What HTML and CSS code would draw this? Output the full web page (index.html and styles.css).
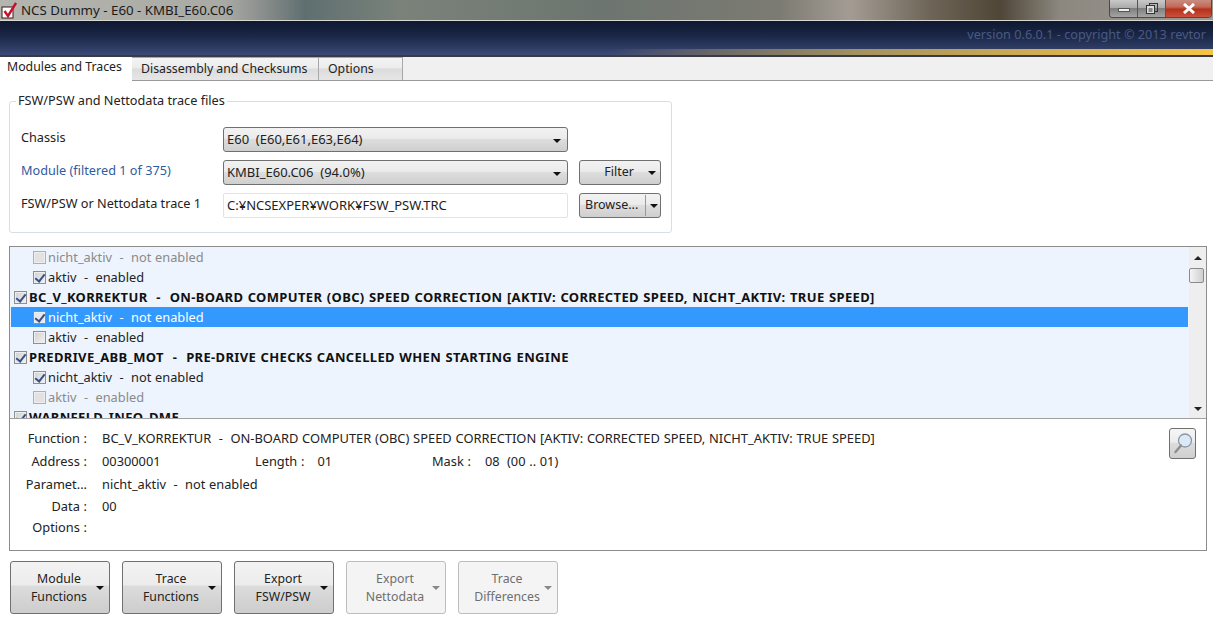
FILE: index.html
```html
<!DOCTYPE html>
<html lang="en">
<head>
<meta charset="utf-8">
<title>NCS Dummy</title>
<link rel="stylesheet" href="styles.css">
</head>
<body>
<div class="window">
  <header class="titlebar">
    <svg class="app-icon" width="16" height="17" viewBox="0 0 16 17"><rect x="1" y="5" width="11" height="11" fill="#fff" stroke="#3a1a1a"/><path d="M3.500 9l3.500 5L15 1" fill="none" stroke="#c8102e" stroke-width="2.400"/></svg>
    <span class="title-text">NCS Dummy - E60 - KMBI_E60.C06</span>
    <div class="caption-buttons">
      <span class="cap cap-min"><i></i></span>
      <span class="cap cap-max"><svg width="13" height="12" viewBox="0 0 13 12"><rect x="4.500" y="0.500" width="8" height="8" fill="none" stroke="#333" /><rect x="1.500" y="2.500" width="8" height="8" fill="#ddd" stroke="#333"/><rect x="3.500" y="5" width="4" height="4" fill="#888"/></svg></span>
      <span class="cap cap-close"><svg width="14" height="11" viewBox="0 0 14 11"><path d="M2 1l10 9M12 1L2 10" stroke="#fff" stroke-width="3"/></svg></span>
    </div>
  </header>
  <div class="banner">
    <div class="version">version 0.6.0.1 - copyright © 2013 revtor</div>
    <div class="goldline"></div>
  </div>
  <nav class="tabs">
    <span class="tab active">Modules and Traces</span>
    <span class="tab tab-dis">Disassembly and Checksums</span>
    <span class="tab tab-opt">Options</span>
  </nav>
  <main class="content">
    <fieldset class="group">
      <legend>FSW/PSW and Nettodata trace files</legend>
      <div class="form-grid">
        <label class="flabel">Chassis</label>
        <div class="combo">E60&nbsp; (E60,E61,E63,E64)<span class="arrow"></span></div>
        <div></div>
        <label class="flabel blue">Module (filtered 1 of 375)</label>
        <div class="combo">KMBI_E60.C06&nbsp; (94.0%)<span class="arrow"></span></div>
        <div class="btn small filter">Filter<span class="arrow"></span></div>
        <label class="flabel">FSW/PSW or Nettodata trace 1</label>
        <div class="textbox">C:¥NCSEXPER¥WORK¥FSW_PSW.TRC</div>
        <div class="btn small browse"><span class="browse-text">Browse...</span><span class="split"></span><span class="arrow"></span></div>
      </div>
    </fieldset>

    <section class="panel">
      <div class="listwrap">
        <ul class="list">
          <li class="row sub dim"><span class="cb"></span>nicht_aktiv&nbsp; -&nbsp; not enabled</li>
          <li class="row sub"><span class="cb on"></span>aktiv&nbsp; -&nbsp; enabled</li>
          <li class="row head"><span class="cb on"></span>BC_V_KORREKTUR&nbsp; -&nbsp; ON-BOARD COMPUTER (OBC) SPEED CORRECTION [AKTIV: CORRECTED SPEED, NICHT_AKTIV: TRUE SPEED]</li>
          <li class="row sub sel"><span class="cb on"></span>nicht_aktiv&nbsp; -&nbsp; not enabled</li>
          <li class="row sub"><span class="cb"></span>aktiv&nbsp; -&nbsp; enabled</li>
          <li class="row head"><span class="cb on"></span>PREDRIVE_ABB_MOT&nbsp; -&nbsp; PRE-DRIVE CHECKS CANCELLED WHEN STARTING ENGINE</li>
          <li class="row sub"><span class="cb on"></span>nicht_aktiv&nbsp; -&nbsp; not enabled</li>
          <li class="row sub dim"><span class="cb"></span>aktiv&nbsp; -&nbsp; enabled</li>
          <li class="row head"><span class="cb on"></span>WARNFELD_INFO_DME</li>
        </ul>
        <div class="scrollbar">
          <span class="sb-up"></span>
          <span class="sb-thumb"></span>
          <span class="sb-down"></span>
        </div>
      </div>
      <div class="details">
        <div class="dl">
          <span class="k">Function :</span><span class="v wide">BC_V_KORREKTUR&nbsp; -&nbsp; ON-BOARD COMPUTER (OBC) SPEED CORRECTION [AKTIV: CORRECTED SPEED, NICHT_AKTIV: TRUE SPEED]</span>
          <span class="k">Address :</span>
          <span class="v triple"><span class="c1">00300001</span><span class="c2"><span class="k2">Length :</span>01</span><span class="c3"><span class="k3">Mask :</span>08&nbsp; (00 .. 01)</span></span>
          <span class="k">Paramet...</span><span class="v">nicht_aktiv&nbsp; -&nbsp; not enabled</span>
          <span class="k">Data :</span><span class="v">00</span>
          <span class="k">Options :</span><span class="v"></span>
        </div>
        <button class="zoom-btn" type="button" aria-label="Search">
          <svg width="22" height="24" viewBox="0 0 22 24"><circle cx="13" cy="9.500" r="6.500" fill="#dbe9f6" stroke="#8a97a5" stroke-width="1.300"/><path d="M9 14.500L3.500 21" stroke="#8d8d8d" stroke-width="2.400" stroke-linecap="round"/></svg>
        </button>
      </div>
    </section>

    <div class="actions">
      <div class="btn big">Module<br>Functions<span class="arrow"></span></div>
      <div class="btn big">Trace<br>Functions<span class="arrow"></span></div>
      <div class="btn big">Export<br>FSW/PSW<span class="arrow"></span></div>
      <div class="btn big disabled">Export<br>Nettodata<span class="arrow"></span></div>
      <div class="btn big disabled">Trace<br>Differences<span class="arrow"></span></div>
    </div>
  </main>
</div>
</body>
</html>
```
FILE: styles.css
```css
* { box-sizing: border-box; }
html, body { margin: 0; padding: 0; }
body {
  width: 1213px; height: 625px; overflow: hidden; background: #fff;
  font: 12.700px/16px "Noto Sans", "Open Sans", sans-serif; color: #222;
}
.window { width: 1213px; height: 625px; display: flex; flex-direction: column; }

.titlebar {
  height: 21px; flex: none; display: flex; align-items: center; position: relative;
  border-bottom: 1px solid #d8d8d4;
  background: linear-gradient(90deg, #b5b5b0 0, #aaaaa5 225px, #8b8f8d 262px, #5f6f70 305px, #7a827a 400px, #6d7570 600px, #7c7b72 780px, #a49c94 850px, #6e6558 930px, #4f4638 1000px, #8c8880 1060px, #9d9a94 1213px);
}
.app-icon { margin: 0 4px 0 1px; }
.title-text { font-size: 13.300px; color: #1b1b1b; }
.caption-buttons {
  position: absolute; right: 1px; top: 0; height: 18px; width: 103px; display: flex;
  border: 1px solid #4a4a4a; border-top: none; border-radius: 0 0 4px 4px; overflow: hidden;
}
.cap { display: flex; align-items: center; justify-content: center; height: 100%; }
.cap-min, .cap-max { width: 28px; background: linear-gradient(#c9c9c9 0, #aaa 45%, #7f7f7f 50%, #a5a5a5 100%); border-right: 1px solid #555; }
.cap-min i { width: 12px; height: 4px; margin-top: 3px; background: #eee; border: 1px solid #555; }
.cap-close { flex: 1; background: linear-gradient(#c98c80 0, #c26a58 40%, #b7301c 55%, #c9523a 100%); }

.banner {
  height: 36px; flex: none; display: flex; flex-direction: column;
  background: linear-gradient(#0f1830 0, #1a2646 40%, #3d4d7c 100%);
}
.version { flex: 1; text-align: right; padding: 5px 7px 0 0; font-size: 12.700px; color: #4a5a82; }
.goldline { height: 8px; border-bottom: 2px solid #3a3a44; background: linear-gradient(90deg, rgba(70,85,130,0) 0, rgba(70,85,130,0) 610px, #6c6a68 720px, #a3935f 860px, #d1ae50 1040px, #f5c445 1213px); }

.tabs {
  height: 24px; flex: none; display: flex; background: #f0f0f0; font-size: 12.300px;
  border-bottom: 1px solid #9a9a9a; position: relative;
}
.tab { display: block; height: 23px; padding-top: 3px; }
.tab.active { width: 132px; height: 24px; background: #fff; padding: 2px 0 0 7px; margin-bottom: -1px; position: relative; }
.tab-dis, .tab-opt {
  padding: 3px 0 0 9px; border: 1px solid #a8a8a8; border-bottom: none; border-left: none;
  background: linear-gradient(#f4f4f4 0, #ececec 45%, #dcdcdc 50%, #e6e6e6 100%);
}
.tab-dis { width: 187px; }
.tab-opt { width: 84px; }

.content { flex: 1; display: flex; flex-direction: column; padding: 0 6px 0 9px; min-height: 0; }

.group {
  margin: 12px 0 0 0; width: 663px; height: 140px; padding: 18px 10px 0 11px; border: 1px solid #d5dfe5; border-radius: 3px;
}
.group legend { padding: 0 2px; margin-left: -5px; height: 16px; line-height: 14px; }
.form-grid { display: grid; grid-template-columns: 202px 345px 82px; row-gap: 8px; grid-auto-rows: 25px; align-items: center; }
.form-grid > :nth-child(3n) { margin-left: 11px; width: 82px; }
.flabel { display: block; padding-bottom: 6px; }
.flabel.blue { color: #2f5b9f; }
.combo, .btn.small {
  position: relative; height: 25px; border: 1px solid #707070; border-radius: 3px; padding: 3px; font-size: 13px;
  background: linear-gradient(#f2f2f2 0, #ebebeb 45%, #dddddd 50%, #cfcfcf 100%);
}
.combo .arrow { position: absolute; right: 6px; top: 11px; }
.textbox { height: 25px; border: 1px solid #e2e3ea; border-radius: 2px; padding: 3px; background: #fff; font-size: 13px; }
.arrow { display: inline-block; width: 0; height: 0; border: 4px solid transparent; border-top: 4px solid #111; border-bottom: none; }
.btn { text-align: center; }
.btn.small.filter { padding: 3px 26px 0 0; text-align: right; font-size: 12.500px; }
.filter .arrow { position: absolute; right: 4px; top: 10px; }
.btn.small.browse { padding: 0 0 0 5px; text-align: left; display: flex; align-items: center; font-size: 12.500px; }
.browse-text { width: 60px; margin-top: -1px; white-space: nowrap; }
.split { width: 1px; height: 21px; background: #999; }
.browse .arrow { margin-left: 4px; }

.panel { margin-top: 13px; width: 1198px; height: 305px; flex: none; border: 1px solid #8c8c8c; display: flex; flex-direction: column; }
.listwrap { height: 172px; flex: none; display: flex; border-bottom: 1px solid #a0a0a0; background: #edf4fd; overflow: hidden; font-size: 12.800px; word-spacing: 0.400px; }
.list { list-style: none; margin: 0; padding: 0 0 0 1px; flex: 1; min-width: 0; }
.row { height: 20px; line-height: 22px; display: flex; align-items: center; white-space: pre; }
.row.sub { padding-left: 22px; }
.row.head { padding-left: 3px; font-weight: 700; color: #111; font-size: 13px; letter-spacing: 0.350px; word-spacing: 0.700px; }
.row.dim { color: #8a8a8a; }
.row.sel { background: #3399ff; color: #fff; }
.cb {
  flex: none; width: 13px; height: 13px; margin-right: 2px; border: 1px solid #8e8f8f; background: linear-gradient(135deg, #d0d0d0, #f2f2f2);
  box-shadow: inset 0 0 0 1px #eee; position: relative;
}
.row.sel .cb { background: #e8e8e8; }
.cb.on::after {
  content: ""; position: absolute; left: 3px; top: 0; width: 4px; height: 8px;
  border: solid #35508a; border-width: 0 2px 2px 0; transform: rotate(38deg);
}
.dim .cb { border-color: #b0b0b0; background: #e2e2e2; }
.scrollbar { width: 17px; flex: none; margin-left: 1px; background: #eeeeee; display: flex; flex-direction: column; align-items: center; position: relative; }
.sb-up { margin-top: 9px; width: 0; height: 0; border: 4px solid transparent; border-bottom: 4px solid #222; border-top: none; }
.sb-thumb { position: absolute; top: 21px; left: 0; width: 15px; height: 15px; border: 1px solid #8a8a8a; border-radius: 2px; background: linear-gradient(90deg, #f4f4f4, #cfcfcf); }
.sb-down { margin-top: auto; margin-bottom: 7px; width: 0; height: 0; border: 4px solid transparent; border-top: 4px solid #222; border-bottom: none; }

.details { flex: 1; display: flex; justify-content: space-between; padding: 11px 10px 0 0; background: #fff; font-size: 12.800px; word-spacing: 0.400px; }
.dl { display: grid; grid-template-columns: 77px auto; column-gap: 15px; grid-template-rows: 23px 23px 22px 21px 21px; align-content: start; flex: 1; }
.k { text-align: right; }
.v { white-space: pre; }
.wide { font-size: 12.900px; }
.triple { display: flex; }
.c1 { width: 153px; }
.c2 { width: 177px; }
.k2 { margin-right: 13px; }
.k3 { margin-right: 14px; }
.zoom-btn { flex: none; width: 27px; height: 31px; margin-top: -2px; padding: 2px 0 0 0; border: 1px solid #707070; border-radius: 3px; background: linear-gradient(#f6f6f6 0, #ececec 45%, #dcdcdc 50%, #cfcfcf 100%); }

.actions { display: flex; gap: 12px; margin-top: 10px; padding-left: 1px; font-size: 12.300px; }
.btn.big {
  position: relative; width: 100px; height: 53px; padding-top: 8px; line-height: 18px; border: 1px solid #707070; border-radius: 3px;
  padding-right: 2px; background: linear-gradient(#f3f3f3 0, #ececec 45%, #dcdcdc 47%, #cdcdcd 100%);
}
.btn.big .arrow { position: absolute; right: 5px; top: 24px; }
.btn.big.disabled { border-color: #bdbdbd; background: #f4f4f4; color: #6f6f6f; }
.btn.big.disabled .arrow { border-top-color: #888; }
```
